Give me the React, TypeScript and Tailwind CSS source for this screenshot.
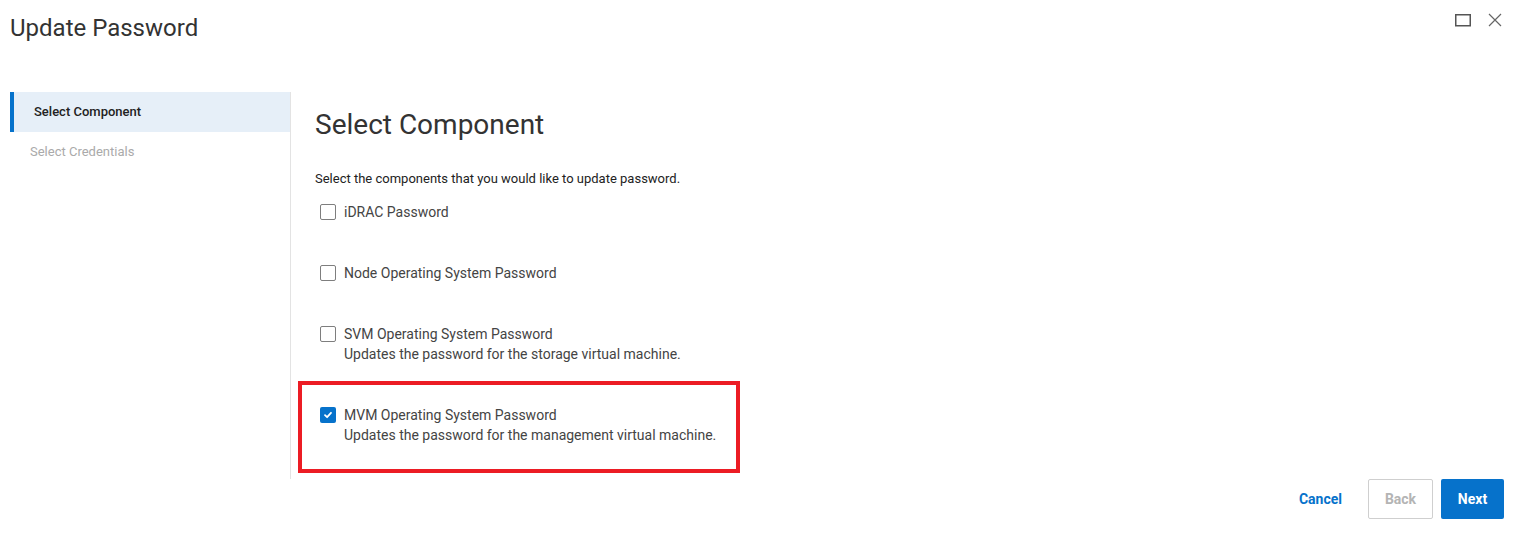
import React from "react";

function Checkbox({ checked }: { checked?: boolean }) {
  if (checked) {
    return (
      <span className="mt-[2px] flex h-4 w-4 shrink-0 items-center justify-center rounded-[2px] bg-[#0672cb]">
        <svg width="10" height="10" viewBox="0 0 10 10" fill="none">
          <path d="M2 5.2 L4.1 7.2 L8 2.8" stroke="#fff" strokeWidth="1.8" strokeLinecap="round" strokeLinejoin="round" />
        </svg>
      </span>
    );
  }
  return <span className="mt-[2px] block h-4 w-4 shrink-0 rounded-[2px] border border-[#7e7e7e] bg-white" />;
}

function Option({ label, desc, checked, highlight }: { label: string; desc?: string; checked?: boolean; highlight?: boolean }) {
  return (
    <div className="relative flex gap-[8px] pl-[5px]">
      {highlight && (
        <div className="pointer-events-none absolute left-[-17px] top-[-24px] h-[92px] w-[442px] border-[4px] border-[#ec1c24]" />
      )}
      <Checkbox checked={checked} />
      <div className="flex flex-col text-[14px] leading-[20px] text-[#444]">
        <span>{label}</span>
        {desc && <span>{desc}</span>}
      </div>
    </div>
  );
}

export default function App() {
  return (
    <div className="h-[534px] w-[1513px] bg-white font-['Roboto',sans-serif] text-[#333]">
      <div className="flex h-[56px] items-start justify-between pl-[10px] pr-[11px]">
        <h1 className="pt-[13px] text-[24px] leading-[30px] font-normal text-[#333]">Update Password</h1>
        <div className="flex items-center gap-[17px] pt-[13px]">
          <svg width="16" height="13" viewBox="0 0 16 13">
            <rect x="0.75" y="0.75" width="14.5" height="11" fill="none" stroke="#555" strokeWidth="1.5" />
          </svg>
          <svg width="14" height="14" viewBox="0 0 14 14">
            <path d="M1 1 L13 13 M13 1 L1 13" stroke="#666" strokeWidth="1.2" />
          </svg>
        </div>
      </div>
      <div className="mt-[36px] flex pl-[10px]">
        <div className="h-[387px] w-[281px] border-r border-[#e3e3e3]">
          <div className="flex h-[40px] items-center border-l-4 border-[#0672cb] bg-[#e6eff8] pl-[20px] text-[13px] font-medium text-[#222]">
            Select Component
          </div>
          <div className="flex h-[40px] items-center pl-[20px] text-[13px] text-[#aaa]">Select Credentials</div>
        </div>
        <div className="pl-[24px] pt-[13px]">
          <h2 className="text-[28px] leading-[40px] font-normal text-[#333]">Select Component</h2>
          <p className="mt-[24px] text-[13px] leading-[20px] text-[#222]">
            Select the components that you would like to update password.
          </p>
          <div className="mt-[13px] flex flex-col gap-[41px]">
            <Option label="iDRAC Password" />
            <Option label="Node Operating System Password" />
            <Option label="SVM Operating System Password" desc="Updates the password for the storage virtual machine." />
            <Option
              label="MVM Operating System Password"
              desc="Updates the password for the management virtual machine."
              checked
              highlight
            />
          </div>
        </div>
      </div>
      <div className="flex items-center justify-end gap-[8px] pr-[9px]">
        <button className="mr-[18px] text-[14px] font-bold text-[#0672cb]">Cancel</button>
        <button className="h-[40px] w-[65px] rounded-[2px] border border-[#cfcfcf] bg-white text-[14px] font-bold text-[#b4b4b4]">
          Back
        </button>
        <button className="h-[40px] w-[63px] rounded-[2px] bg-[#0672cb] text-[14px] font-bold text-white">Next</button>
      </div>
    </div>
  );
}
